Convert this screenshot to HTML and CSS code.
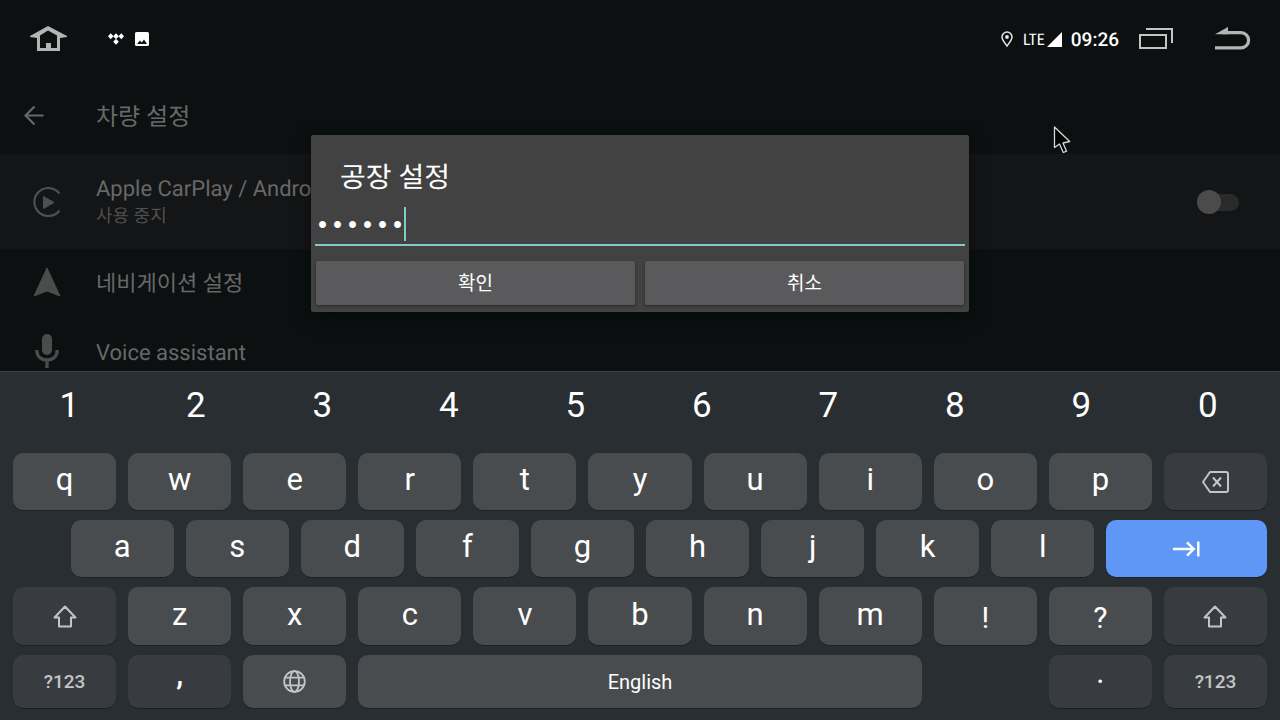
FILE: index.html
```html
<!DOCTYPE html>
<html lang="ko">
<head>
<meta charset="utf-8">
<meta name="viewport" content="width=device-width, initial-scale=1">
<title>차량 설정</title>
<link rel="stylesheet" href="styles.css">
</head>
<body>
<header class="status">
  <button class="icon-btn" aria-label="Home"><svg width="38" height="28" viewBox="0 0 38 28"><path fill="#b4b4b4" fill-rule="evenodd" d="M19 1 38 11v1L31 13V26H8V13L1 12V11ZM19 5.500 11 10.500V23h6v-5h5v5h6V10.500Z"/></svg></button>
  <div class="notices">
    <svg width="16" height="12" viewBox="0 0 16 12"><path fill="#fff" d="m2.700 0.200 2.800 3-2.800 3L0 3.200ZM8 .2l2.800 3L8 6.200 5.200 3.200ZM13.300.2 16 3.200l-2.700 3-2.800-3ZM8 5.700l2.800 3L8 11.700 5.200 8.700Z"/></svg>
    <svg width="14" height="15" viewBox="0 0 14 15"><path fill="#fff" fill-rule="evenodd" d="M1.500 0h11Q14 0 14 1.500v11q0 1.500-1.500 1.500h-11Q0 14 0 12.500v-11Q0 0 1.500 0ZM2 12h10L9 7.500l-2.200 3L5 8.500Z"/></svg>
  </div>
  <div class="signals">
    <svg width="12" height="16" viewBox="0 0 12 16"><path fill="none" stroke="#e6e6e6" stroke-width="1.500" d="M6 15C3.500 11.500 1 8.800 1 6a5 5 0 0 1 10 0c0 2.800-2.500 5.500-5 9Z"/><circle cx="6" cy="6" r="1.900" fill="#e6e6e6"/></svg>
    <div class="network"><span>LTE</span><svg width="16" height="15" viewBox="0 0 16 15"><path fill="#fff" d="M15 0v15H0Z"/></svg></div>
  </div>
  <time class="clock">09:26</time>
  <button class="icon-btn recents" aria-label="Recent apps"><svg width="34" height="22" viewBox="0 0 34 22"><path fill="none" stroke="#c4c4c4" stroke-width="2" d="M1 7h26v13H1ZM7 1h26v14"/></svg></button>
  <button class="icon-btn back-key" aria-label="Back"><svg width="36" height="24" viewBox="0 0 36 24"><path fill="none" stroke="#b4b4b4" stroke-width="3.200" d="M7 5.700h19a7.600 7.600 0 0 1 0 15.200H0"/><path fill="#b4b4b4" d="M0 7.300 13 0v7.300Z"/></svg></button>
</header>

<main class="content">
  <div class="app-bar">
    <button class="icon-btn up" aria-label="뒤로"><svg width="20" height="20" viewBox="0 0 20 20"><path fill="none" stroke="#686868" stroke-width="2.200" d="M19.500 10.500H1.800M10.500 1.500 1.500 10.500l9 9"/></svg></button>
    <h1>차량 설정</h1>
  </div>
  <ul class="settings">
    <li class="row first">
      <span class="row-icon"><svg width="30" height="30" viewBox="0 0 30 30"><path fill="none" stroke="#4e4f50" stroke-width="2.200" d="M27.500 6.500a14 14 0 1 0 0 17"/><path fill="#4e4f50" stroke="#4e4f50" stroke-linejoin="round" d="M11.500 9.500v12L22 15.500Z"/></svg></span>
      <span class="row-text"><label for="carplay">Apple CarPlay / Android</label><small>사용 중지</small></span>
      <input class="switch" id="carplay" type="checkbox">
    </li>
    <li class="row">
      <span class="row-icon"><svg width="28" height="30" viewBox="0 0 28 30"><path fill="#4b4c4c" stroke="#4b4c4c" stroke-linejoin="round" d="M14 1 27 29 14 24 1 29Z"/></svg></span>
      <span class="row-text">네비게이션 설정</span>
    </li>
    <li class="row">
      <span class="row-icon"><svg width="24" height="34" viewBox="0 0 24 34"><rect x="7" y="0" width="10" height="21" rx="5" fill="#4b4c4c"/><path fill="none" stroke="#4b4c4c" stroke-width="3.400" d="M1.800 16c0 6.500 4.500 10 10.200 10s10.200-3.500 10.200-10M12 26v8"/></svg></span>
      <span class="row-text">Voice assistant</span>
    </li>
  </ul>
  <div class="overlay">
    <form class="dialog" role="dialog" aria-labelledby="dialog-title">
      <h2><label id="dialog-title" for="password">공장 설정</label></h2>
      <div class="field"><input id="password" type="password" value="123456"><span class="caret"></span></div>
      <div class="actions"><button type="button">확인</button><button type="button">취소</button></div>
    </form>
  </div>
</main>

<section class="keyboard" aria-label="Keyboard">
  <div class="numbers"><button>1</button><button>2</button><button>3</button><button>4</button><button>5</button><button>6</button><button>7</button><button>8</button><button>9</button><button>0</button></div>
  <div class="keys">
    <button>q</button><button>w</button><button>e</button><button>r</button><button>t</button><button>y</button><button>u</button><button>i</button><button>o</button><button>p</button>
    <button class="dark" aria-label="Backspace"><svg width="27" height="22" viewBox="0 0 27 22"><path fill="none" stroke="#c3c5c6" stroke-width="2" stroke-linejoin="round" d="M8 1h16q2 0 2 2v16q0 2-2 2H8L1 11ZM11 6.500l8 9M19 6.500l-8 9"/></svg></button>

    <button class="home-row">a</button><button>s</button><button>d</button><button>f</button><button>g</button><button>h</button><button>j</button><button>k</button><button>l</button>
    <button class="next" aria-label="Next"><svg width="27" height="16" viewBox="0 0 27 16"><path fill="none" stroke="#fff" stroke-width="2.400" d="M0 8h20.500M14 1.300 20.700 8 14 14.700M25.300 0.500v15"/></svg></button>

    <button class="dark" aria-label="Shift"><svg width="24" height="23" viewBox="0 0 24 23"><path fill="none" stroke="#c3c5c6" stroke-width="2" stroke-linejoin="round" d="M12 1.500 1.500 12.500H6V21.500H18V12.500h4.500Z"/></svg></button>
    <button>z</button><button>x</button><button>c</button><button>v</button><button>b</button><button>n</button><button>m</button><button class="mark">!</button><button class="mark">?</button>
    <button class="dark" aria-label="Shift"><svg width="24" height="23" viewBox="0 0 24 23"><path fill="none" stroke="#c3c5c6" stroke-width="2" stroke-linejoin="round" d="M12 1.500 1.500 12.500H6V21.500H18V12.500h4.500Z"/></svg></button>

    <button class="dark symbols">?123</button><button class="dark comma">,</button>
    <button aria-label="Language"><svg width="23" height="23" viewBox="0 0 23 23"><g fill="none" stroke="#c3c5c6" stroke-width="1.800"><circle cx="11.500" cy="11.500" r="10.300"/><ellipse cx="11.500" cy="11.500" rx="4.500" ry="10.300"/><path d="M2 7.700h19M2 15.300h19"/></g></svg></button>
    <button class="space">English</button><button class="dark period">.</button><button class="dark symbols">?123</button>
  </div>
</section>

<svg class="pointer" width="20" height="29" viewBox="0 0 20 29"><path fill="#000" stroke="#d8d8d8" stroke-width="1.300" stroke-linejoin="round" d="M1.500 1v20.500l5-3.500 3.800 8.500 3.200-1.300-3.500-8.200 6.700-1.500Z"/></svg>
</body>
</html>
```
FILE: styles.css
```css
* { box-sizing: border-box; }

body {
  position: relative;
  display: flex;
  flex-direction: column;
  height: 100vh;
  margin: 0;
  overflow: hidden;
  background: #0c1011;
  color: #686868;
  font-family: Roboto, "Noto Sans CJK KR", sans-serif;
  font-size: 22px;
  text-rendering: geometricPrecision;
}

button {
  padding: 0;
  border: 0;
  background: none;
  color: #fff;
  font: inherit;
}

svg { display: block; }

/* Status bar */
.status {
  display: flex;
  flex: none;
  align-items: center;
  height: 76px;
  padding: 2px 29px 0;
  color: #fff;
}
.notices {
  display: flex;
  align-items: center;
  gap: 11px;
  margin-left: 41px;
}
.signals {
  display: flex;
  align-items: center;
  gap: 10px;
  margin-left: auto;
}
.network {
  display: flex;
  align-items: center;
  gap: 2px;
  font-family: "Roboto Condensed", Roboto, sans-serif;
  font-size: 16px;
}
.clock {
  margin: 0 20px 0 8px;
  font-size: 19px;
  font-weight: 500;
}
.back-key { margin-left: 42px; }

/* Settings screen */
.content {
  position: relative;
  flex: 1;
  min-height: 0;
  overflow: hidden;
}
.app-bar {
  display: flex;
  align-items: center;
  gap: 52px;
  height: 78px;
  padding: 0 24px;
}
h1 {
  margin: 0;
  padding-bottom: 2px;
  font-size: 24px;
  font-weight: 400;
}
.settings {
  margin: 0;
  padding: 0;
  list-style: none;
}
.row {
  display: flex;
  align-items: center;
  height: 69px;
  padding-right: 41px;
}
.row.first {
  height: 95px;
  background: #141516;
}
.row-icon {
  display: flex;
  justify-content: center;
  width: 94px;
  margin-right: 2px;
  padding-bottom: 3px;
}
.first .row-icon { padding: 0; }
.row-text {
  display: flex;
  flex: 1;
  flex-direction: column;
  padding-top: 3px;
  line-height: 28px;
}
.row-text small {
  color: #4f5050;
  font-size: 18px;
  line-height: 26px;
}
.switch {
  position: relative;
  width: 42px;
  height: 24px;
  margin: 0;
  appearance: none;
}
.switch::before {
  position: absolute;
  inset: 4px 0 3px 8px;
  border-radius: 9px;
  background: #292a2a;
  content: "";
}
.switch::after {
  position: absolute;
  top: 0;
  left: 0;
  width: 24px;
  height: 24px;
  border-radius: 50%;
  background: #4b4b4b;
  content: "";
}

/* Password dialog */
.overlay {
  position: absolute;
  inset: 0;
  display: flex;
  align-items: center;
  justify-content: center;
}
.dialog {
  width: 100%;
  max-width: 658px;
  padding: 22px 4px 7px;
  border-radius: 2px;
  background: #424242;
  box-shadow: 0 6px 20px rgba(0, 0, 0, 0.4);
  color: #fff;
}
h2 {
  margin: 0 25px 6px;
  font-size: 28px;
  font-weight: 400;
  line-height: 42px;
}
.field { position: relative; }
.field input {
  display: block;
  width: 100%;
  height: 41px;
  padding: 4px 0 0;
  border: 0;
  border-bottom: 2px solid #80cbc4;
  outline: 0;
  background: none;
  color: #fff;
  font-family: "Liberation Mono", monospace;
  font-size: 25px;
}
.caret {
  position: absolute;
  top: 2px;
  left: 89px;
  width: 2px;
  height: 34px;
  background: #80cbc4;
}
.actions {
  display: flex;
  gap: 10px;
  margin: 15px 1px 0;
}
.actions button {
  flex: 1;
  height: 44px;
  padding-bottom: 3px;
  border-radius: 2px;
  background: #5a5a5c;
  box-shadow: 0 1px 3px rgba(0, 0, 0, 0.4);
  font-size: 19px;
}

/* On-screen keyboard */
.keyboard {
  flex: none;
  padding-bottom: 12px;
  border-top: 1px solid #3b4043;
  background: #292e32;
}
.numbers {
  display: grid;
  grid-template-columns: repeat(10, 1fr);
  height: 81px;
  padding: 0 9px 14px 6px;
}
.numbers button { font-size: 35px; }
.keys {
  display: grid;
  grid-template-columns: repeat(22, 1fr);
  grid-template-rows: 57px 57px 58px 53px;
  gap: 10px 12px;
  padding: 0 13px;
}
.keys button {
  display: flex;
  grid-column: span 2;
  align-items: center;
  justify-content: center;
  padding-bottom: 4px;
  border-radius: 10px;
  background: #494c4e;
  box-shadow: 0 1px 0 #1d2124;
  font-size: 31px;
}
.keys button:has(svg) { padding: 0; }
.keys .dark { background: #383c40; }
.keys .home-row { grid-column: 2 / span 2; }
.keys .next {
  grid-column: span 3;
  background: #5e97f6;
}
.keys .mark {
  padding: 2px 0 0;
  font-size: 30px;
}
.keys .comma {
  padding-bottom: 14px;
  font-weight: 500;
}
.keys .symbols {
  padding: 0;
  color: #c3c5c6;
  font-size: 19px;
  font-weight: 500;
}
.keys .space {
  grid-column: span 10;
  padding: 0;
  font-size: 20px;
}
.keys .period {
  grid-column: 19 / span 2;
  padding-bottom: 18px;
}

.pointer {
  position: absolute;
  top: 126px;
  left: 1053px;
}
```
